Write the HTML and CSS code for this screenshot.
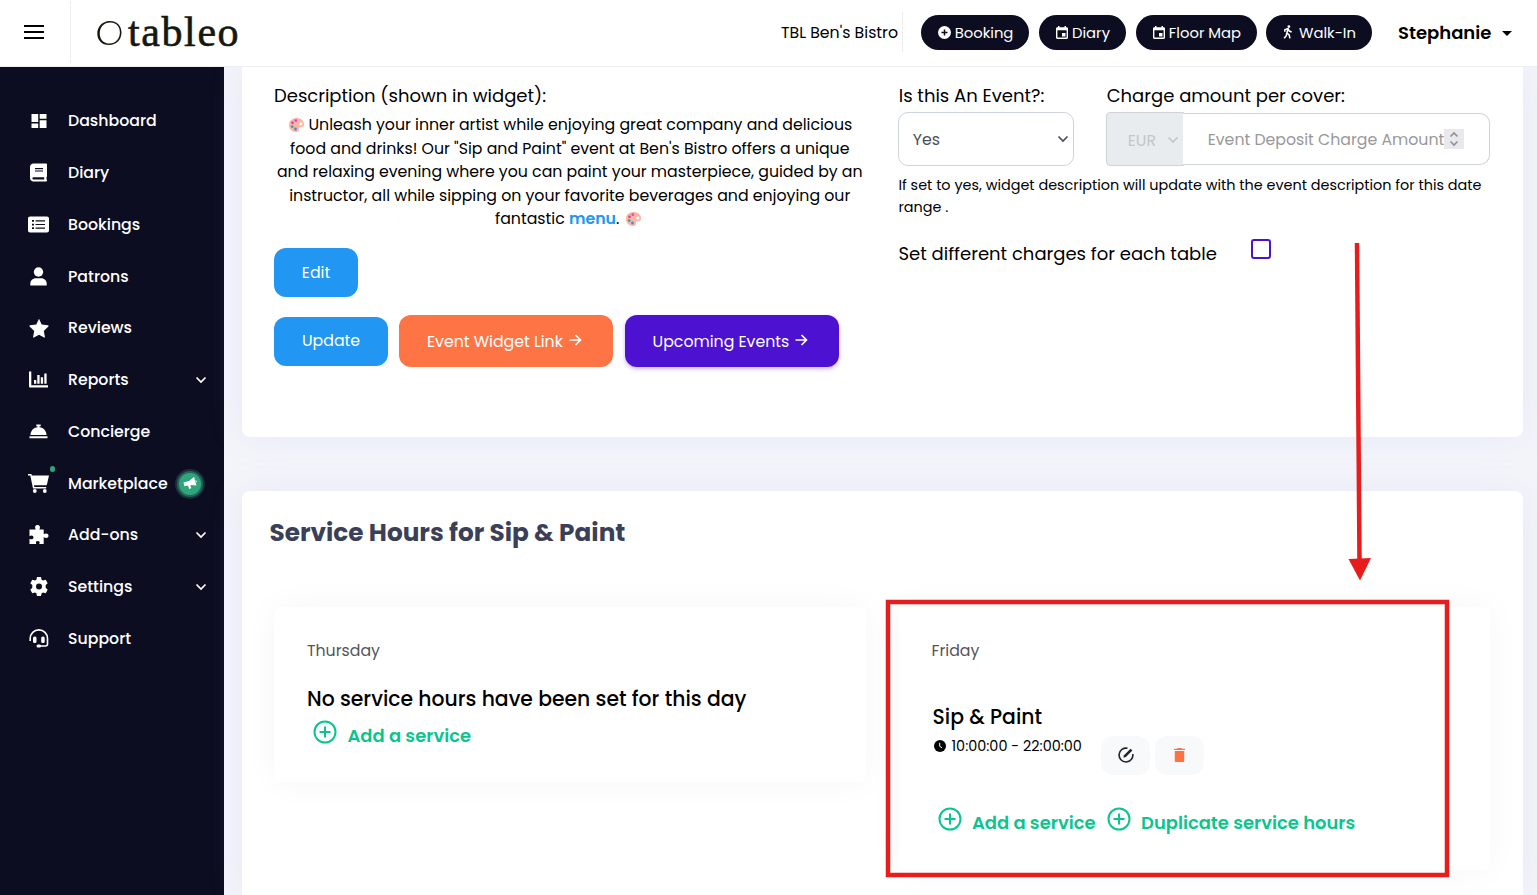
FILE: index.html
```html
<!DOCTYPE html>
<html lang="en">
<head>
    <meta charset="UTF-8">
    <meta name="viewport" content="width=device-width, initial-scale=1.0">
    <title>Tableo - Service Hours</title>
    <link rel="stylesheet" href="styles.css">
</head>
<body>
    <!-- Shared icons -->
    <svg class="defs" width="0" height="0">
        <symbol id="chevron" viewBox="0 0 12 8"><path d="M1.500 1.500 6 6l4.500-4.500" fill="none" stroke="currentColor" stroke-width="1.700"/></symbol>
        <symbol id="plus" viewBox="0 0 24 24"><circle cx="12" cy="12" r="10.500" fill="none" stroke="currentColor" stroke-width="2"/><path d="M12 6.500v11M6.500 12h11" stroke="currentColor" stroke-width="2"/></symbol>
        <symbol id="calendar" viewBox="0 0 12 13"><path fill-rule="evenodd" d="M2 0h1.500v1.300h5V0H10v1.300h.7c.7 0 1.300.6 1.300 1.300v9c0 .8-.6 1.400-1.300 1.400H1.300C.6 13 0 12.400 0 11.600v-9c0-.7.6-1.300 1.300-1.300H2zM1.400 4.300v7.300h9.200V4.300zM6 7h3.500v3.500H6z" fill="currentColor"/></symbol>
        <symbol id="arrow" viewBox="0 0 12 12"><path d="M0 6h11M6 1l5 5-5 5" fill="none" stroke="currentColor" stroke-width="1.700"/></symbol>
        <symbol id="palette" viewBox="0 0 16 16">
            <path fill-rule="evenodd" d="M8 1C3.500 1 .5 4 .5 8c0 4.300 3.300 7 7.300 7 2.200 0 3-1.400 2.500-2.700-.5-1.500.4-2.200 1.900-2.100 2.100.1 3.500-1 3.400-3C15.400 3.600 12.200 1 8 1zm4.300 4.600c1 0 1.600.6 1.600 1.400S13.300 8.500 12.300 8.500 10.700 7.800 10.700 7s.6-1.400 1.600-1.400z" fill="#ffb3a2"/>
            <circle cx="7.300" cy="3.600" r="1.400" fill="#c34fe0"/><circle cx="4" cy="5.700" r="1.300" fill="#df3b8e"/><circle cx="3.700" cy="9.600" r="1.400" fill="#36a3a5"/><circle cx="7" cy="12" r="1.400" fill="#3c8df0"/>
        </symbol>
    </svg>

    <header class="topbar">
        <button class="menu-btn" aria-label="Menu"><span></span><span></span><span></span></button>
        <div class="logo">
            <svg width="25" height="26" viewBox="0 0 26 26"><path fill-rule="evenodd" d="M13 .5C20 .3 25.500 5 25.500 12.500 25.500 20 20 25.500 12.500 25.500 5 25.500.3 20.500.3 13.500.3 6.500 5.500.8 13 .5zm1 1.700C7.500 2 3.100 6.500 2.900 13c-.2 7 4 11 10.200 11 6.200 0 10.700-5 10.700-11.500 0-6.300-3.900-10.100-9.800-10.300z" fill="#16180f"/></svg>
            <span>tableo</span>
        </div>
        <div class="restaurant">TBL Ben's Bistro</div>
        <nav class="quick">
            <a class="pill booking"><svg width="13" height="13" viewBox="0 0 13 13"><circle cx="6.500" cy="6.500" r="6.500" fill="#fff"/><path d="M6.500 3.500v6M3.500 6.500h6" stroke="#0d0d21" stroke-width="1.500"/></svg><span>Booking</span></a>
            <a class="pill diary"><svg width="12" height="13"><use href="#calendar"/></svg><span>Diary</span></a>
            <a class="pill floor"><svg width="12" height="13"><use href="#calendar"/></svg><span>Floor Map</span></a>
            <a class="pill walk"><svg width="10" height="14" viewBox="0 0 11 15"><circle cx="6.500" cy="1.500" r="1.500" fill="#fff"/><path d="M2 7.200V5l3.500-1.300 1.400 2.800 2.600 1M5.400 4.200 4.300 8.600l2.500 2.100.8 3.800M4.200 8.800l-.7 3L1.200 14.500" fill="none" stroke="#fff" stroke-width="1.700"/></svg><span>Walk-In</span></a>
        </nav>
        <div class="user">Stephanie</div>
    </header>

    <div class="layout">
        <aside class="sidebar">
            <a class="item"><span class="icon"><svg width="16" height="16" viewBox="0 0 16 16"><path d="M.5 1h6.700v8H.5zM8.700 1h6.800v4.800H8.700zM.5 10.500h6.700V15H.5zM8.700 7.300h6.800V15H8.700z"/></svg></span>Dashboard</a>
            <a class="item"><span class="icon"><svg width="17" height="19" viewBox="0 0 17 19"><path fill-rule="evenodd" d="M3.500.5H16c.6 0 1 .4 1 1v11.700c0 .4-.2.700-.5.900v2.500c.4.100.5.400.5.800 0 .6-.4 1.100-1 1.100H3.500C1.600 18.500 0 17 0 15V4C0 2 1.600.5 3.500.5zM5 5v1.200h8V5zm0 2.400v1.200h8V7.400zM3.500 14.200c-1.500 0-1.500 2.300 0 2.300h10.700v-2.300z"/></svg></span>Diary</a>
            <a class="item"><span class="icon"><svg width="21" height="17" viewBox="0 0 21 17"><path fill-rule="evenodd" d="M2 .5h17c1.100 0 2 .9 2 2v12c0 1.100-.9 2-2 2H2c-1.100 0-2-.9-2-2v-12c0-1.100.9-2 2-2zM4 4v1.700h2V4zm3.500.2v1.200H17V4.200zM4 7.700v1.700h2V7.700zm3.500.2v1.200H17V7.900zM4 11.300V13h2v-1.700zm3.500.3v1.200H17v-1.200z"/></svg></span>Bookings</a>
            <a class="item"><span class="icon"><svg width="17" height="19" viewBox="0 0 17 19"><circle cx="8.500" cy="5" r="4.700"/><path d="M.3 18.500v-2c0-3 2.500-5.300 5.500-5.300h5.400c3 0 5.500 2.300 5.500 5.300v2z"/></svg></span>Patrons</a>
            <a class="item"><span class="icon"><svg width="20" height="20" viewBox="0 0 20 20"><path d="m10 .7 2.700 5.700 6.300.9c.6.100.8.800.4 1.200l-4.600 4.400 1.100 6.200c.1.500-.4.700-.8.500L10 16.700l-5.100 2.900c-.4.200-.9 0-.8-.5l1.100-6.200L.6 8.500c-.4-.4-.2-1.100.4-1.200l6.300-.9z"/></svg></span>Reviews</a>
            <a class="item"><span class="icon"><svg width="19" height="17" viewBox="0 0 19 17"><path d="M0 .5h2.300v13.800H19v2.200H1.500C.6 16.500 0 16 0 15zM5 9h2.300v3.800H5zM8.300 4h2.300v8.800H8.300zM11.800 6.300h2.300v6.500h-2.300zM15.300 2.500h2.300v10.300h-2.300z"/></svg></span>Reports<svg class="chev" width="12" height="8"><use href="#chevron"/></svg></a>
            <a class="item"><span class="icon"><svg width="19" height="15" viewBox="0 0 19 15"><path d="M7.300.5h4.400v1.700h-1.200v1c4.100.5 7 3.700 7 7.700h-16c0-4 2.900-7.200 7-7.700v-1H7.300zM.5 12.300h18v2H.5z"/></svg></span>Concierge</a>
            <a class="item market"><span class="icon"><svg width="21" height="19" viewBox="0 0 21 19"><path d="M0 0h3.300l.6 1.500H21l-2 8.700c-.1.600-.6 1-1.300 1H6l.4 1.700h11.800v1.600H5L2.300 1.600H0z"/><circle cx="6.800" cy="17" r="1.900"/><circle cx="16.800" cy="17" r="1.900"/></svg><i class="dot"></i></span>Marketplace<span class="promo"><svg width="14" height="13" viewBox="0 0 14 13"><path d="M.5 5.500 6 4l5-4 2.500 8.500L7.400 8l.8 3.300-2.100.6L5 8.600l-3.700.7zM12.300 3.200l1.700.8-.7 1.500z" fill="#fff"/></svg></span></a>
            <a class="item"><span class="icon"><svg width="20" height="19" viewBox="0 0 20 19"><path d="M.5 4.500h6.300C5.500 2.500 6 0 8.500 0S11.600 2.500 10.300 4.500h4.400v4.700c1.800-1.400 4.800-1 4.800 1.500s-3 2.800-4.800 1.300V19h-4.500c1.100-2 .3-3-1.400-3s-2.500 1-1.500 3H.5v-5.300c2 1.300 4 .6 4-1.200 0-1.900-2-2.700-4-1.300z"/></svg></span>Add-ons<svg class="chev" width="12" height="8"><use href="#chevron"/></svg></a>
            <a class="item"><span class="icon"><svg width="18" height="19" viewBox="0 0 18 19"><path fill-rule="evenodd" d="M7 0h4l.6 2.700 1.500.9 2.600-.9 2 3.500-2 1.800v2.800l2 1.900-2 3.500-2.600-.8-1.500.8L11 19H7l-.6-2.800-1.500-.8-2.600.8-2-3.500 2-1.900V8L.3 6.200l2-3.500 2.600.9 1.500-.9zM9 6.500a3 3 0 1 0 0 6 3 3 0 0 0 0-6z"/></svg></span>Settings<svg class="chev" width="12" height="8"><use href="#chevron"/></svg></a>
            <a class="item"><span class="icon"><svg width="20" height="19" viewBox="0 0 20 19"><path d="M1.200 12V9.500a8.600 8.600 0 0 1 17.300 0V15c0 1.300-.8 2-2 2H11" fill="none" stroke="#fff" stroke-width="1.600"/><rect x="4" y="7.500" width="3.500" height="6.500" rx="1.500"/><rect x="12.200" y="7.500" width="3.500" height="6.500" rx="1.500"/><rect x="7.500" y="15.500" width="4.500" height="3" rx="1.500"/></svg></span>Support</a>
        </aside>

        <main class="content">
            <section class="card event">
                <div class="description">
                    <h4>Description (shown in widget):</h4>
                    <p>
                        <span class="l1"><svg width="17" height="16"><use href="#palette"/></svg> Unleash your inner artist while enjoying great company and delicious</span>
                        <span>food and drinks! Our "Sip and Paint" event at Ben's Bistro offers a unique</span>
                        <span>and relaxing evening where you can paint your masterpiece, guided by an</span>
                        <span>instructor, all while sipping on your favorite beverages and enjoying our</span>
                        <span class="l5">fantastic <a>menu</a>. <svg width="17" height="16"><use href="#palette"/></svg></span>
                    </p>
                    <button class="btn edit">Edit</button>
                    <div class="actions">
                        <button class="btn update">Update</button>
                        <button class="btn orange">Event Widget Link <svg width="13" height="12"><use href="#arrow"/></svg></button>
                        <button class="btn purple">Upcoming Events <svg width="13" height="12"><use href="#arrow"/></svg></button>
                    </div>
                </div>

                <div class="charges">
                    <div class="fields">
                        <div class="field">
                            <h4>Is this An Event?:</h4>
                            <div class="select">Yes<svg width="12" height="8"><use href="#chevron"/></svg></div>
                        </div>
                        <div class="field">
                            <h4>Charge amount per cover:</h4>
                            <div class="group">
                                <div class="currency">EUR<svg width="12" height="8"><use href="#chevron"/></svg></div>
                                <div class="deposit"><span>Event Deposit Charge Amount</span><i class="spinner"><svg width="10" height="16" viewBox="0 0 10 16"><path d="M1.500 5.500 5 2l3.500 3.500M1.500 10.500 5 14l3.500-3.500" fill="none" stroke="#8f8f9d" stroke-width="1.600"/></svg></i></div>
                            </div>
                        </div>
                    </div>
                    <p class="note">If set to yes, widget description will update with the event description for this date<br>range .</p>
                    <div class="per-table"><span>Set different charges for each table</span><i class="checkbox"></i></div>
                </div>
            </section>

            <section class="card hours">
                <h2>Service Hours for Sip &amp; Paint</h2>
                <div class="days">
                    <div class="day thursday">
                        <div class="day-name">Thursday</div>
                        <h3>No service hours have been set for this day</h3>
                        <div class="links">
                            <a class="add"><svg width="24" height="24"><use href="#plus"/></svg>Add a service</a>
                        </div>
                    </div>
                    <div class="day friday">
                        <div class="day-name">Friday</div>
                        <div class="service">
                            <div>
                                <h3>Sip &amp; Paint</h3>
                                <div class="time"><svg width="12" height="12" viewBox="0 0 12 12"><circle cx="6" cy="6" r="6"/><path d="M5.700 2.800v3.500l2.300 1.500" fill="none" stroke="#fff" stroke-width="1"/></svg>10:00:00 - 22:00:00</div>
                            </div>
                            <button class="tool" aria-label="Edit"><svg width="16" height="16" viewBox="0 0 16 16"><path d="M9.500 1.300A6.900 6.900 0 1 0 14.800 7" fill="none" stroke="#212529" stroke-width="1.600"/><path d="M5.300 10.800 6 8.200l6.500-6.500 1.900 1.900-6.500 6.500z" fill="#212529"/></svg></button>
                            <button class="tool" aria-label="Delete"><svg width="11" height="14" viewBox="0 0 11 14"><path d="M0 .7h3L3.700 0h3.600L8 .7h3V2H0zM.8 3h9.400v9.700c0 .8-.5 1.300-1.300 1.300H2.100c-.8 0-1.300-.5-1.300-1.300z" fill="#ff7043"/></svg></button>
                        </div>
                        <div class="links">
                            <a class="add"><svg width="24" height="24"><use href="#plus"/></svg>Add a service</a>
                            <a class="add"><svg width="24" height="24"><use href="#plus"/></svg>Duplicate service hours</a>
                        </div>
                    </div>
                </div>
            </section>
        </main>
    </div>

    <!-- Annotation over the page -->
    <svg class="annotation" width="1537" height="895" viewBox="0 0 1537 895">
        <path d="M1357 243 1359.500 560" stroke="#e81c1c" stroke-width="4.500"/>
        <path d="M1348.500 559 1371 558 1360 580.500z" fill="#e81c1c"/>
        <rect x="888" y="602" width="559" height="273" fill="none" stroke="#e81c1c" stroke-width="4.500"/>
    </svg>
</body>
</html>
```
FILE: styles.css
```css
* {
    box-sizing: border-box;
}

body {
    margin: 0;
    height: 895px;
    overflow: hidden;
    background-color: #f4f5fa;
    font-family: Poppins, Inter, sans-serif;
    font-size: 15.750px;
    color: #000;
    white-space: nowrap;
}

h2, h3, h4, p {
    margin: 0;
}

svg {
    flex-shrink: 0;
}

button {
    font-family: inherit;
    border: none;
}

.defs {
    display: block;
}

/* Top bar */
.topbar {
    position: relative;
    display: flex;
    align-items: center;
    height: 67px;
    padding-bottom: 2px;
    background-color: #fff;
    border-bottom: 1px solid #eeeef0;
}

.menu-btn {
    display: flex;
    flex-direction: column;
    gap: 4px;
    justify-content: center;
    width: 71px;
    height: 62px;
    padding: 0 0 0 24px;
    background: none;
    border-right: 1px solid #eee;
}

.menu-btn span {
    width: 20px;
    height: 2px;
    background-color: #000;
}

.logo {
    display: flex;
    align-items: center;
    width: 710px;
    padding-left: 26px;
    font-family: "Liberation Serif", serif;
    font-size: 42px;
    line-height: 50px;
    letter-spacing: 1.600px;
    color: #16180f;
    -webkit-text-stroke: 0.600px #16180f;
}

.logo svg {
    margin-top: 1px;
}

.logo span {
    margin: -1px 0 0 6px;
}

.restaurant {
    width: 122px;
    height: 40px;
    padding-top: 1px;
    line-height: 40px;
    border-right: 1px solid #eee;
}

.quick {
    display: flex;
    gap: 10px;
    margin-left: 18px;
}

.pill {
    display: flex;
    align-items: center;
    justify-content: center;
    gap: 4px;
    height: 35px;
    padding-left: 1px;
    border-radius: 18px;
    background-color: #0d0d21;
    color: #fff;
    font-size: 14.800px;
}

.pill span {
    padding-top: 2px;
}

.booking { width: 108px; }
.diary { width: 87px; }
.floor { width: 121px; }

.walk {
    width: 106px;
    margin-left: -1px;
    gap: 6px;
}

.user {
    display: flex;
    align-items: center;
    gap: 11px;
    margin-left: 26px;
    font-size: 18px;
    font-weight: 600;
}

.user::after {
    content: "";
    margin-top: 2px;
    border: 5px solid transparent;
    border-top-color: #000;
    border-bottom: none;
}

/* Sidebar */
.layout {
    display: flex;
    height: 828px;
}

.sidebar {
    width: 224px;
    padding-top: 28px;
    background-color: #0d0d21;
}

.item {
    display: flex;
    align-items: center;
    height: 51.720px;
    padding-right: 17px;
    color: #fff;
    font-weight: 500;
}

.icon {
    position: relative;
    display: flex;
    justify-content: center;
    width: 41px;
    margin: 0 9px 0 18px;
}

.icon svg {
    fill: #fff;
}

.chev {
    margin-left: auto;
    margin-top: 1px;
}

.dot {
    position: absolute;
    top: -8px;
    right: 4px;
    width: 5px;
    height: 6px;
    border-radius: 3px;
    background-color: #2fa57c;
}

.market {
    padding-top: 1px;
}

.promo {
    display: flex;
    align-items: center;
    justify-content: center;
    width: 22px;
    height: 22px;
    margin: 1px 0 0 11px;
    border-radius: 50%;
    background-color: #2fa57c;
    box-shadow: 0 0 0 2px #266455, 0 0 0 4px #1a2f3a;
}

/* Content */
.content {
    flex: 1;
    padding: 0 14px 0 18px;
}

.card {
    background-color: #fff;
    box-shadow: 0 0 35px rgba(154, 161, 225, 0.150);
}

.event {
    display: grid;
    grid-template-columns: 591.500px 591.500px;
    gap: 33px;
    height: 370px;
    padding: 17px 32px 0;
    border-radius: 0 0 8px 8px;
}

h4 {
    font-size: 18px;
    font-weight: 400;
    line-height: 24px;
}

.description p {
    display: flex;
    flex-direction: column;
    align-items: center;
    margin-top: 5px;
    line-height: 23.500px;
}

.description p svg {
    vertical-align: -3px;
}

.l1 {
    padding-left: 1px;
}

.l1 svg {
    margin-right: -1px;
}

.l5 {
    padding-right: 2px;
}

.l5 svg {
    margin-left: 2px;
}

.description a {
    color: #2196f3;
    font-weight: 600;
}

.btn {
    border-radius: 12px;
    color: #fff;
    font-size: 15.750px;
}

.edit {
    display: block;
    width: 84px;
    height: 49px;
    margin-top: 17.500px;
    background-color: #2196f3;
}

.actions {
    display: flex;
    align-items: center;
    margin-top: 18px;
}

.update {
    width: 114px;
    height: 49px;
    padding-bottom: 3px;
    background-color: #2196f3;
}

.orange, .purple {
    width: 214px;
    height: 52px;
    padding-right: 9px;
}

.btn svg {
    margin-left: 2px;
    vertical-align: 1px;
}

.orange {
    margin: 0 12px 0 11px;
    background-color: #ff7444;
}

.purple {
    background-color: #4c11d1;
    box-shadow: 0 2px 4px rgba(76, 17, 209, 0.300);
}

.charges h4 {
    padding-left: 1px;
}

.fields {
    display: flex;
    gap: 32px;
    margin-left: -0.800px;
}

.select {
    display: flex;
    align-items: center;
    justify-content: space-between;
    width: 176px;
    height: 54px;
    margin-top: 4px;
    padding: 0 4px 0 14px;
    border: 1px solid #ced4da;
    border-radius: 10px;
    color: #495057;
}

.group {
    display: flex;
    align-items: center;
    margin-top: 4px;
}

.currency {
    display: flex;
    align-items: center;
    justify-content: space-between;
    width: 78px;
    height: 54px;
    padding: 2px 4px 0 21px;
    border: 1px solid #ced4da;
    border-radius: 4px 0 0 4px;
    background-color: #e9ecef;
    color: #c3c6ca;
}

.deposit {
    display: flex;
    align-items: center;
    width: 307px;
    height: 52px;
    margin-left: -1px;
    padding-left: 25px;
    border: 1px solid #ced4da;
    border-left: none;
    border-radius: 0 10px 10px 0;
    background-color: #fff;
    color: #999;
}

.deposit span {
    width: 236px;
}

.spinner {
    display: flex;
    align-items: center;
    justify-content: center;
    width: 20px;
    height: 20px;
    background-color: #e9e9ed;
}

.note {
    margin-top: 8px;
    font-size: 14.400px;
    line-height: 22px;
}

.per-table {
    display: flex;
    justify-content: space-between;
    width: 372px;
    margin-top: 21px;
    font-size: 18px;
    line-height: 30px;
}

.checkbox {
    width: 20px;
    height: 20px;
    border: 2px solid #4c11d1;
    border-radius: 3px;
}

/* Service hours */
.hours {
    height: 404px;
    margin-top: 54px;
    padding: 24px 32px 0;
    border-radius: 8px 8px 0 0;
}

h2 {
    margin-left: -4.500px;
    color: #3c3f58;
    font-size: 24.750px;
    line-height: 36px;
    font-weight: 700;
}

.days {
    display: grid;
    grid-template-columns: 591.500px 591.500px;
    align-items: start;
    gap: 33px;
    margin-top: 56px;
}

.day {
    padding: 32px 33px 0;
    border-radius: 8px;
    background-color: #fff;
    box-shadow: 0 0 35px rgba(0, 0, 0, 0.040);
}

.thursday {
    height: 175px;
}

.friday {
    height: 263px;
}

.day-name {
    color: #555;
    line-height: 24px;
}

h3 {
    font-size: 20.350px;
    font-weight: 500;
    line-height: 30px;
}

.thursday h3 {
    margin-top: 21px;
}

.service {
    display: flex;
    align-items: flex-end;
    height: 73px;
    margin: 39px 0 0 1px;
}

.service > div {
    align-self: flex-start;
    width: 168px;
}

.time {
    display: flex;
    align-items: center;
    gap: 6px;
    margin: 4px 0 0 1px;
    font-size: 14.400px;
    line-height: 20px;
}

.tool {
    display: flex;
    align-items: center;
    justify-content: center;
    width: 49px;
    height: 39px;
    margin-right: 5px;
    padding: 0 6px 2px 7px;
    border-radius: 12px;
    background-color: #f8f9fb;
}

.links {
    display: flex;
    gap: 11px;
    margin-left: 6px;
}

.friday .links {
    margin-top: 32px;
}

.thursday .links {
    margin-top: 6px;
}

.add {
    display: flex;
    gap: 10.500px;
    color: #09c58e;
    font-size: 17.950px;
    line-height: 31px;
    font-weight: 600;
}

/* Red arrow and frame */
.annotation {
    position: absolute;
    top: 0;
    left: 0;
    pointer-events: none;
}
```
